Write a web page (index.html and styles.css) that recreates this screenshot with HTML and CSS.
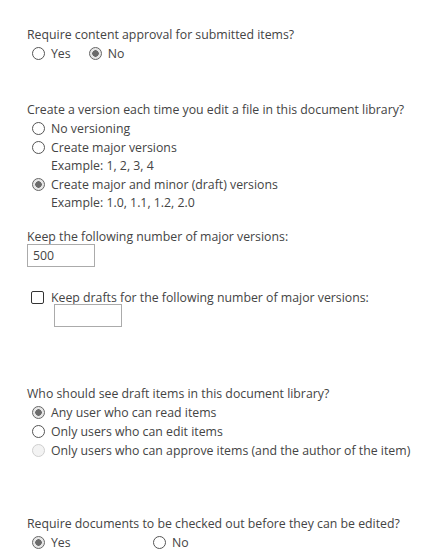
FILE: index.html
```html
<!DOCTYPE html>
<html lang="en">
<head>
    <meta charset="UTF-8">
    <meta name="viewport" content="width=device-width, initial-scale=1.0">
    <title>Versioning Settings</title>
    <link rel="stylesheet" href="styles.css">
</head>
<body>
    <div class="settings">
        <div class="block approval">
            <p class="question">Require content approval for submitted items?</p>
            <div class="inline-choices">
                <label class="choice"><input type="radio" name="approval"> Yes</label>
                <label class="choice"><input type="radio" name="approval" checked> No</label>
            </div>
        </div>

        <div class="block history">
            <p class="question">Create a version each time you edit a file in this document library?</p>
            <label class="choice"><input type="radio" name="versioning"> No versioning</label>
            <label class="choice"><input type="radio" name="versioning"> Create major versions</label>
            <div class="example">Example: 1, 2, 3, 4</div>
            <label class="choice"><input type="radio" name="versioning" checked> Create major and minor (draft) versions</label>
            <div class="example">Example: 1.0, 1.1, 1.2, 2.0</div>
        </div>

        <div class="block limits">
            <p class="question">Keep the following number of major versions:</p>
            <input type="text" class="num-box" value="500">
        </div>

        <div class="block drafts">
            <label class="choice check"><input type="checkbox"> Keep drafts for the following number of major versions:</label>
            <input type="text" class="num-box indent">
        </div>

        <div class="block security">
            <p class="question">Who should see draft items in this document library?</p>
            <label class="choice"><input type="radio" name="draft" checked> Any user who can read items</label>
            <label class="choice"><input type="radio" name="draft"> Only users who can edit items</label>
            <label class="choice"><input type="radio" name="draft" disabled> Only users who can approve items (and the author of the item)</label>
        </div>

        <div class="block checkout">
            <p class="question">Require documents to be checked out before they can be edited?</p>
            <div class="inline-choices wide">
                <label class="choice"><input type="radio" name="checkout" checked> Yes</label>
                <label class="choice"><input type="radio" name="checkout"> No</label>
            </div>
        </div>
    </div>
</body>
</html>
```

FILE: styles.css
```css
body {
    margin: 0;
    padding: 0;
    background: #fff;
    color: #444;
    font-family: "Segoe UI", "Open Sans", sans-serif;
    font-size: 12.3px;
}
.settings {
    padding: 25px 0 0 27px;
}
.block {
    display: flex;
    flex-direction: column;
    align-items: flex-start;
}
.question {
    margin: 0;
    line-height: 19px;
}
.choice {
    display: flex;
    align-items: center;
    line-height: 19px;
    padding-left: 5px;
    gap: 6px;
    white-space: nowrap;
}
.inline-choices {
    display: flex;
    gap: 13px;
}
.inline-choices.wide {
    gap: 19px;
}
.inline-choices.wide .choice:first-child {
    width: 97px;
}
.example {
    padding-left: 24px;
    line-height: 18px;
}
.approval {
    margin-bottom: 37px;
}
.history {
    margin-bottom: 15px;
}
.limits {
    margin-bottom: 21px;
}
.drafts {
    margin-bottom: 57px;
}
.security {
    margin-bottom: 54px;
}

/* radio + checkbox look */
input[type="radio"] {
    appearance: none;
    margin: 0;
    width: 13px;
    height: 13px;
    border: 1px solid #555;
    border-radius: 50%;
    background: #fff;
    box-sizing: border-box;
    flex: none;
}
input[type="radio"]:checked {
    border-color: #666;
    background: radial-gradient(circle, #6b6b6b 0 3px, #e6e6e6 3.5px);
}
input[type="radio"]:disabled {
    border-color: #cfcfcf;
    background: #f3f3f3;
}
input[type="checkbox"] {
    appearance: none;
    margin: 0 0 0 -1px;
    width: 13px;
    height: 13px;
    border: 1px solid #333;
    border-radius: 2px;
    background: #fff;
    box-sizing: border-box;
    flex: none;
}
.check {
    gap: 7px;
}
.num-box {
    width: 68px;
    height: 23px;
    box-sizing: border-box;
    margin-top: -2px;
    padding: 0 5px;
    border: 1px solid #ababab;
    font-family: inherit;
    font-size: 12.3px;
    color: #444;
}
.num-box.indent {
    margin-left: 27px;
    margin-top: -3px;
}
```
